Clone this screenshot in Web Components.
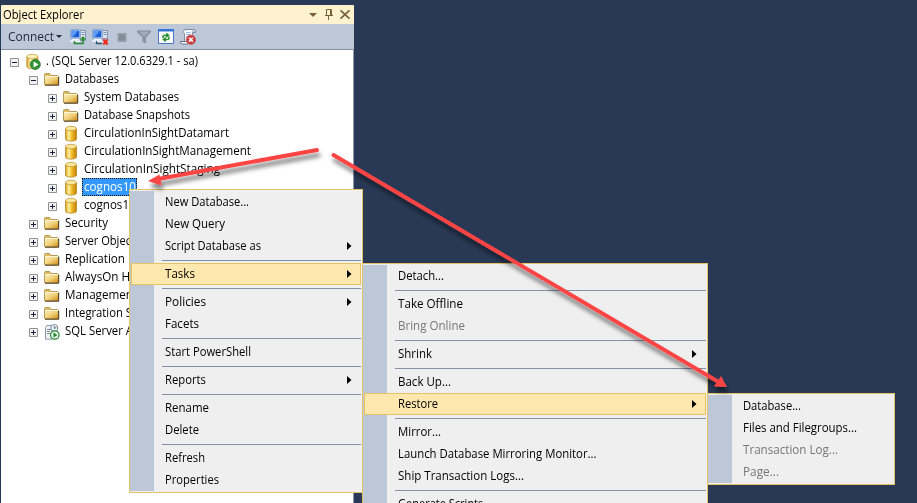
<!DOCTYPE html>
<html lang="en"><head><meta charset="utf-8"><title>Object Explorer</title>
<style>
html,body{margin:0;height:100%;overflow:hidden;background:#293955}
body{font:12px/18px "Open Sans","Noto Sans",sans-serif;color:#000}
</style></head><body>
<desk-top></desk-top>
<script>
const css = (root, html) => { root.attachShadow({mode:'open'}).innerHTML = html; };

/* One line of interface text, condensed to the width given in w. */
class UiText extends HTMLElement {
  connectedCallback(){
    css(this, `<style>:host{display:block;white-space:pre;flex:none;width:max-content}span{display:inline-block;transform-origin:0 50%}</style><span><slot></slot></span>`);
    const s = this.shadowRoot.querySelector('span'), w = +this.getAttribute('w');
    if (w) { s.style.transform = `scaleX(${(w+1)/s.getBoundingClientRect().width})`; this.style.width = (w+1)+'px'; }
  }
}
customElements.define('ui-text', UiText);

const ICONS = {
folder:`<defs><linearGradient id="g" x1="0" y1="0" x2="1" y2="1"><stop offset="0" stop-color="#fdf0bd"/><stop offset=".5" stop-color="#f2d27d"/><stop offset="1" stop-color="#d08b12"/></linearGradient></defs>
<path d="M.5 3.5V2.5Q.5 1.5 1.5 1.5H5.5L7 3.5H13.5V12.5H.5Z" fill="#dfba63" stroke="#b59a58"/><path d="M1 4H14.3V12.5H1Z" fill="url(#g)"/><path d="M1 4.5H14" stroke="#fff6d6"/><path d="M1 13.2H14.7V4.5" fill="none" stroke="#3b2c0c" stroke-width="1"/>`,
db:`<defs><linearGradient id="g"><stop offset="0" stop-color="#d79a13"/><stop offset=".3" stop-color="#fff0a0"/><stop offset=".55" stop-color="#f3c02e"/><stop offset="1" stop-color="#c17f06"/></linearGradient></defs>
<path d="M2.5 2.5V13C2.5 15.8 13.5 15.8 13.5 13V2.5Z" fill="url(#g)" stroke="#b98a24" stroke-width=".8"/><ellipse cx="8" cy="2.5" rx="5.5" ry="2.2" fill="#fae79a" stroke="#c79c3d" stroke-width=".8"/>`,
server:`<defs><linearGradient id="g"><stop offset="0" stop-color="#d9a52c"/><stop offset=".35" stop-color="#fff3b5"/><stop offset="1" stop-color="#d69b18"/></linearGradient></defs>
<path d="M.8 2.7V12.5C.8 15.5 11.8 15.5 11.8 12.5V2.7Z" fill="url(#g)" stroke="#bb9136" stroke-width=".8"/><ellipse cx="6.3" cy="2.5" rx="5.5" ry="2.2" fill="#fdf0ba" stroke="#c9a24a" stroke-width=".8"/><circle cx="9.3" cy="10.5" r="5" fill="#319735" stroke="#1d6b28" stroke-width=".8"/><path d="M7.6 7.6L12.4 10.5L7.6 13.4Z" fill="#fff"/>`,
agent:`<path d="M1.5 3.5L3 1.5H9.5V13.5L8 15.2H1.5Z" fill="#edf1f5" stroke="#8d99a8"/><path d="M3 5.5H7M3 7.5H6M3 9.5H6" stroke="#8290a0"/><circle cx="10.3" cy="4" r="3.5" fill="#f5f9fc" stroke="#738397"/><path d="M10.3 2V4.5L12.3 3.5" fill="none" stroke="#546b86"/><circle cx="10.8" cy="11" r="4.2" fill="#fff" stroke="#2d873a" stroke-width="1.3"/><path d="M9.4 8.3L13.6 11L9.4 13.7Z" fill="#268a35"/>`,
connect:`<path d="M10.5 1.5H15.5V11.5H10.5Z" fill="#dfe6f1" stroke="#8395ae"/><path d="M11.5 3.5H14.5M11.5 5.5H14.5" stroke="#7890b4"/><path d="M.5 .5H10.5V9.5H.5Z" fill="#e9f0fa" stroke="#90a9cc"/><path d="M1.5 1.5H9.5V8.5H1.5Z" fill="#1f5fd6"/><path d="M1.5 1.5H8L2.5 8.5H1.5Z" fill="#5b9bf5"/><path d="M2 10.5H9M0 12.2H10" stroke="#f4f7fb" stroke-width="1.4"/><path d="M4.5 12V14.5H13V9" fill="none" stroke="#28882d" stroke-width="1.5"/><path d="M10 10.7L13 7L16 10.7Z" fill="#268c28"/>`,
disconnect:`<path d="M10.5 1.5H15.5V9.5H10.5Z" fill="#dfe6f1" stroke="#8395ae"/><path d="M11.5 3.5H14.5M11.5 5.5H14.5" stroke="#7890b4"/><path d="M.5 .5H10.5V9.5H.5Z" fill="#e9f0fa" stroke="#90a9cc"/><path d="M1.5 1.5H9.5V8.5H1.5Z" fill="#1f5fd6"/><path d="M1.5 1.5H8L2.5 8.5H1.5Z" fill="#5b9bf5"/><path d="M2 10.5H9M0 12.2H10" stroke="#f4f7fb" stroke-width="1.4"/><path d="M4.5 12V14.5H10" fill="none" stroke="#35556d" stroke-width="1.3"/><path d="M11.3 10.3L15.7 15.5M15.7 10.3L11.3 15.5" stroke="#ed2c16" stroke-width="2"/>`,
stop:`<path d="M3.5 4H12.5V13H3.5Z" fill="#95a0ae"/><path d="M5 5.5H11V11.5H5Z" fill="#818c99"/>`,
filter:`<path d="M1 1.5H15V3L10 8.5V14.5L6.5 13V8.5L1 3Z" fill="#87919f"/><path d="M3 2.8H13L8 7.8Z" fill="#a2acb9"/>`,
refresh:`<path d="M.5 .5H15.5V14.5H.5Z" fill="#fbfdff" stroke="#4a78c4"/><path d="M0 0H16V2.5H0Z" fill="#3573d6"/><path d="M5 9V7.5Q5 6.3 6.5 6.3H9M11 7.5V9Q11 10.5 9.5 10.5H7" fill="none" stroke="#39983b" stroke-width="1.7"/><path d="M8.3 3.6L11.6 6.3L8.3 9ZM7.7 7.8L4.4 10.5L7.7 13.2Z" fill="#218728"/>`,
script:`<path d="M3.5 2.5Q4 .5 6 .5H15Q13 .5 12.5 3.5V12.5H4.5V4.5Q3.5 4 3.5 2.5Z" fill="#f7f9fc" stroke="#7e8da1"/><path d="M14 .5Q16 .5 15.5 3.5H12.5" fill="#d3dce8" stroke="#7e8da1"/><path d="M6 3.5H10.5M6 5.5H10.5M6 7.5H9" stroke="#9bb9e2"/><path d="M.5 12.5H8V15H2Q.5 15 .5 12.5Z" fill="#fff" stroke="#63758d"/><circle cx="10.9" cy="10.7" r="4.7" fill="#d33b3c" stroke="#b85558" stroke-width=".7"/><path d="M9 8.8L12.8 12.6M12.8 8.8L9 12.6" stroke="#fff" stroke-width="1.5"/>`,
caret:`<path d="M4 6H12L8 10Z" fill="#75633d"/>`,
pin:`<path d="M5.5 2.5H10.5V8.5M5.5 2.5V8.5M4 8.5H12M7.5 9V13" fill="none" stroke="#75633d"/><path d="M9.5 3V8" stroke="#75633d"/>`,
close:`<path d="M3.5 3.3L12.5 11.7M12.5 3.3L3.5 11.7" stroke="#75633d" stroke-width="1.7"/>`
};
class UiIcon extends HTMLElement {
  connectedCallback(){ css(this, `<style>:host{display:block;flex:none;width:16px;height:16px}svg{display:block;overflow:visible}</style><svg width="16" height="16" viewBox="0 0 16 16">${ICONS[this.getAttribute('name')]}</svg>`); }
}
customElements.define('ui-icon', UiIcon);

class TreeItem extends HTMLElement {
  connectedCallback(){
    const l = +this.getAttribute('level'), open = this.hasAttribute('open'), sel = this.hasAttribute('selected');
    css(this, `<style>:host{display:flex;height:18px;align-items:center;padding-left:${9+19*l}px}
    svg{flex:none;margin:2px 7px 0 0}ui-icon{margin-top:1px;margin-left:${l?-1:0}px}
    div{margin-left:${l?3:2}px;padding:0 1px 0 2px;height:18px;box-sizing:border-box;line-height:17px}
    ${sel?'div{background:#3399ff;color:#fff;outline:1px dotted #1d1206;outline-offset:-1px}':''}</style>
    <svg width="9" height="9"><path d="M.5 .5H8.5V8.5H.5Z" fill="#f2f2f2" stroke="#929292"/><path d="M2 4.5H7${open?'':'M4.5 2V7'}" stroke="#17213c"/></svg>
    <ui-icon name="${this.getAttribute('icon')}"></ui-icon><div><ui-text w="${this.getAttribute('w')}">${this.getAttribute('label')}</ui-text></div>`);
  }
}
customElements.define('tree-item', TreeItem);

class ObjectExplorer extends HTMLElement {
  connectedCallback(){
    const rows=[[0,'server','. (SQL Server 12.0.6329.1 - sa)',151,'open'],[1,'folder','Databases',53,'open'],[2,'folder','System Databases',94],[2,'folder','Database Snapshots',105],[2,'db','CirculationInSightDatamart',144],[2,'db','CirculationInSightManagement',166],[2,'db','CirculationInSightStaging',135],[2,'db','cognos10',51,'selected'],[2,'db','cognos1',44],[1,'folder','Security',42],[1,'folder','Server Objec',65],[1,'folder','Replication',59],[1,'folder','AlwaysOn H',64],[1,'folder','Managemen',67],[1,'folder','Integration S',66],[1,'agent','SQL Server A',67]];
    css(this, `<style>:host{display:flex;flex-direction:column;box-sizing:border-box;width:353px;height:498px}
    header{display:flex;align-items:center;height:19px;background:#fff2cf;padding:0 1px 0 2px;border-radius:1px 1px 0 0}
    header ui-text{margin-right:auto}
    nav{display:flex;align-items:center;height:25px;background:#bcc7d8;padding-left:7px;border-bottom:1px solid #8590a3;color:#1b293e}
    main{flex:1;background:#fff;padding-top:2px;border-right:1px solid #8e9bb0}
    </style>
    <header><ui-text w="80">Object Explorer</ui-text><ui-icon name="caret"></ui-icon><ui-icon name="pin"></ui-icon><ui-icon name="close"></ui-icon></header>
    <nav><ui-text w="45">Connect</ui-text><svg width="8" height="5" style="margin:0 4px 0 1px"><path d="M1 1H7L4 4Z" fill="#1b293e"/></svg>
    ${['connect','disconnect','stop','filter','refresh','script'].map(n=>`<ui-icon name="${n}" style="margin:1px 3px 0"></ui-icon>`).join('')}</nav>
    <main>${rows.map(r=>`<tree-item level="${r[0]}" icon="${r[1]}" label="${r[2]}" w="${r[3]}" ${r[4]||''}></tree-item>`).join('')}</main>`);
  }
}
customElements.define('object-explorer', ObjectExplorer);

class MenuItem extends HTMLElement {
  connectedCallback(){
    css(this, `<style>:host{display:flex;box-sizing:border-box;height:22px;align-items:center;justify-content:space-between;padding:0 9px 0 34px;margin:0 1px;border:1px solid transparent;border-width:1px 0}
    :host([active]){background:#ffe8ad;border:1px solid #e5c365;padding:0 8px 0 33px}
    :host([disabled]){color:#767676}</style><ui-text w="${this.getAttribute('w')}">${this.getAttribute('label')}</ui-text>${this.hasAttribute('more')?'<svg width="5" height="8"><path d="M0 0L4.5 4L0 8Z"/></svg>':''}`);
  }
}
customElements.define('menu-item', MenuItem);

class ContextMenu extends HTMLElement {
  connectedCallback(){
    css(this, `<style>:host{display:block;box-sizing:border-box;border:1px solid #e5c365;padding:1px 0;background:linear-gradient(#bcc7d8,#bcc7d8) 0 1px/24px calc(100% - 2px) no-repeat #efefef}
    hr{border:0;margin:3px 1px 2px 32px;height:1px;background:#8391a7}</style>
    ${JSON.parse(this.getAttribute('items')).map(i=>i?`<menu-item label="${i[0]}" w="${i[1]}" ${i[2]||''}></menu-item>`:'<hr>').join('')}`);
  }
}
customElements.define('context-menu', ContextMenu);

class DeskTop extends HTMLElement {
  connectedCallback(){
    const m1=[['New Database...',83],['New Query',59],['Script Database as',95,'more'],0,['Tasks',29,'more active'],0,['Policies',40,'more'],['Facets',33],0,['Start PowerShell',85],0,['Reports',40,'more'],0,['Rename',43],['Delete',33],0,['Refresh',39],['Properties',53]];
    const m2=[['Detach...',45],0,['Take Offline',64],['Bring Online',66,'disabled'],0,['Shrink',33,'more'],0,['Back Up...',52],['Restore',39,'more active'],0,['Mirror...',42],['Launch Database Mirroring Monitor...',197.5],['Ship Transaction Logs...',125],0,['Generate Scripts...',93]];
    const m3=[['Database...',57],['Files and Filegroups...',113],['Transaction Log...',94,'disabled'],['Page...',35,'disabled']];
    const menu=(x,y,w,m)=>`<context-menu style="left:${x}px;top:${y}px;width:${w}px" items='${JSON.stringify(m)}'></context-menu>`;
    css(this, `<style>:host{display:block;position:relative;width:917px;height:503px;overflow:hidden;background:#293955;box-sizing:border-box;padding:5px 0 0 1px}
    context-menu,.marks{position:absolute}.marks{left:0;top:0}</style>
    <object-explorer></object-explorer>${menu(129,189,234,m1)}${menu(362,263,346,m2)}${menu(707,393,188,m3)}
    <svg class="marks" width="917" height="503"><defs><filter id="s" x="-10%" y="-10%" width="120%" height="140%"><feDropShadow dx="1.5" dy="5" stdDeviation="2" flood-color="#000" flood-opacity=".5"/></filter></defs>
    <g fill="#fb4444" stroke="#fb4444" stroke-width="4" stroke-linecap="round" filter="url(#s)"><path d="M317 150L158 179M333.5 155L717 381"/><path stroke="none" d="M148 181L159.5 174.5L161.5 185.5ZM727 387L721 376L714 386.5Z"/></g></svg>`);
  }
}
customElements.define('desk-top', DeskTop);
</script></body></html>
